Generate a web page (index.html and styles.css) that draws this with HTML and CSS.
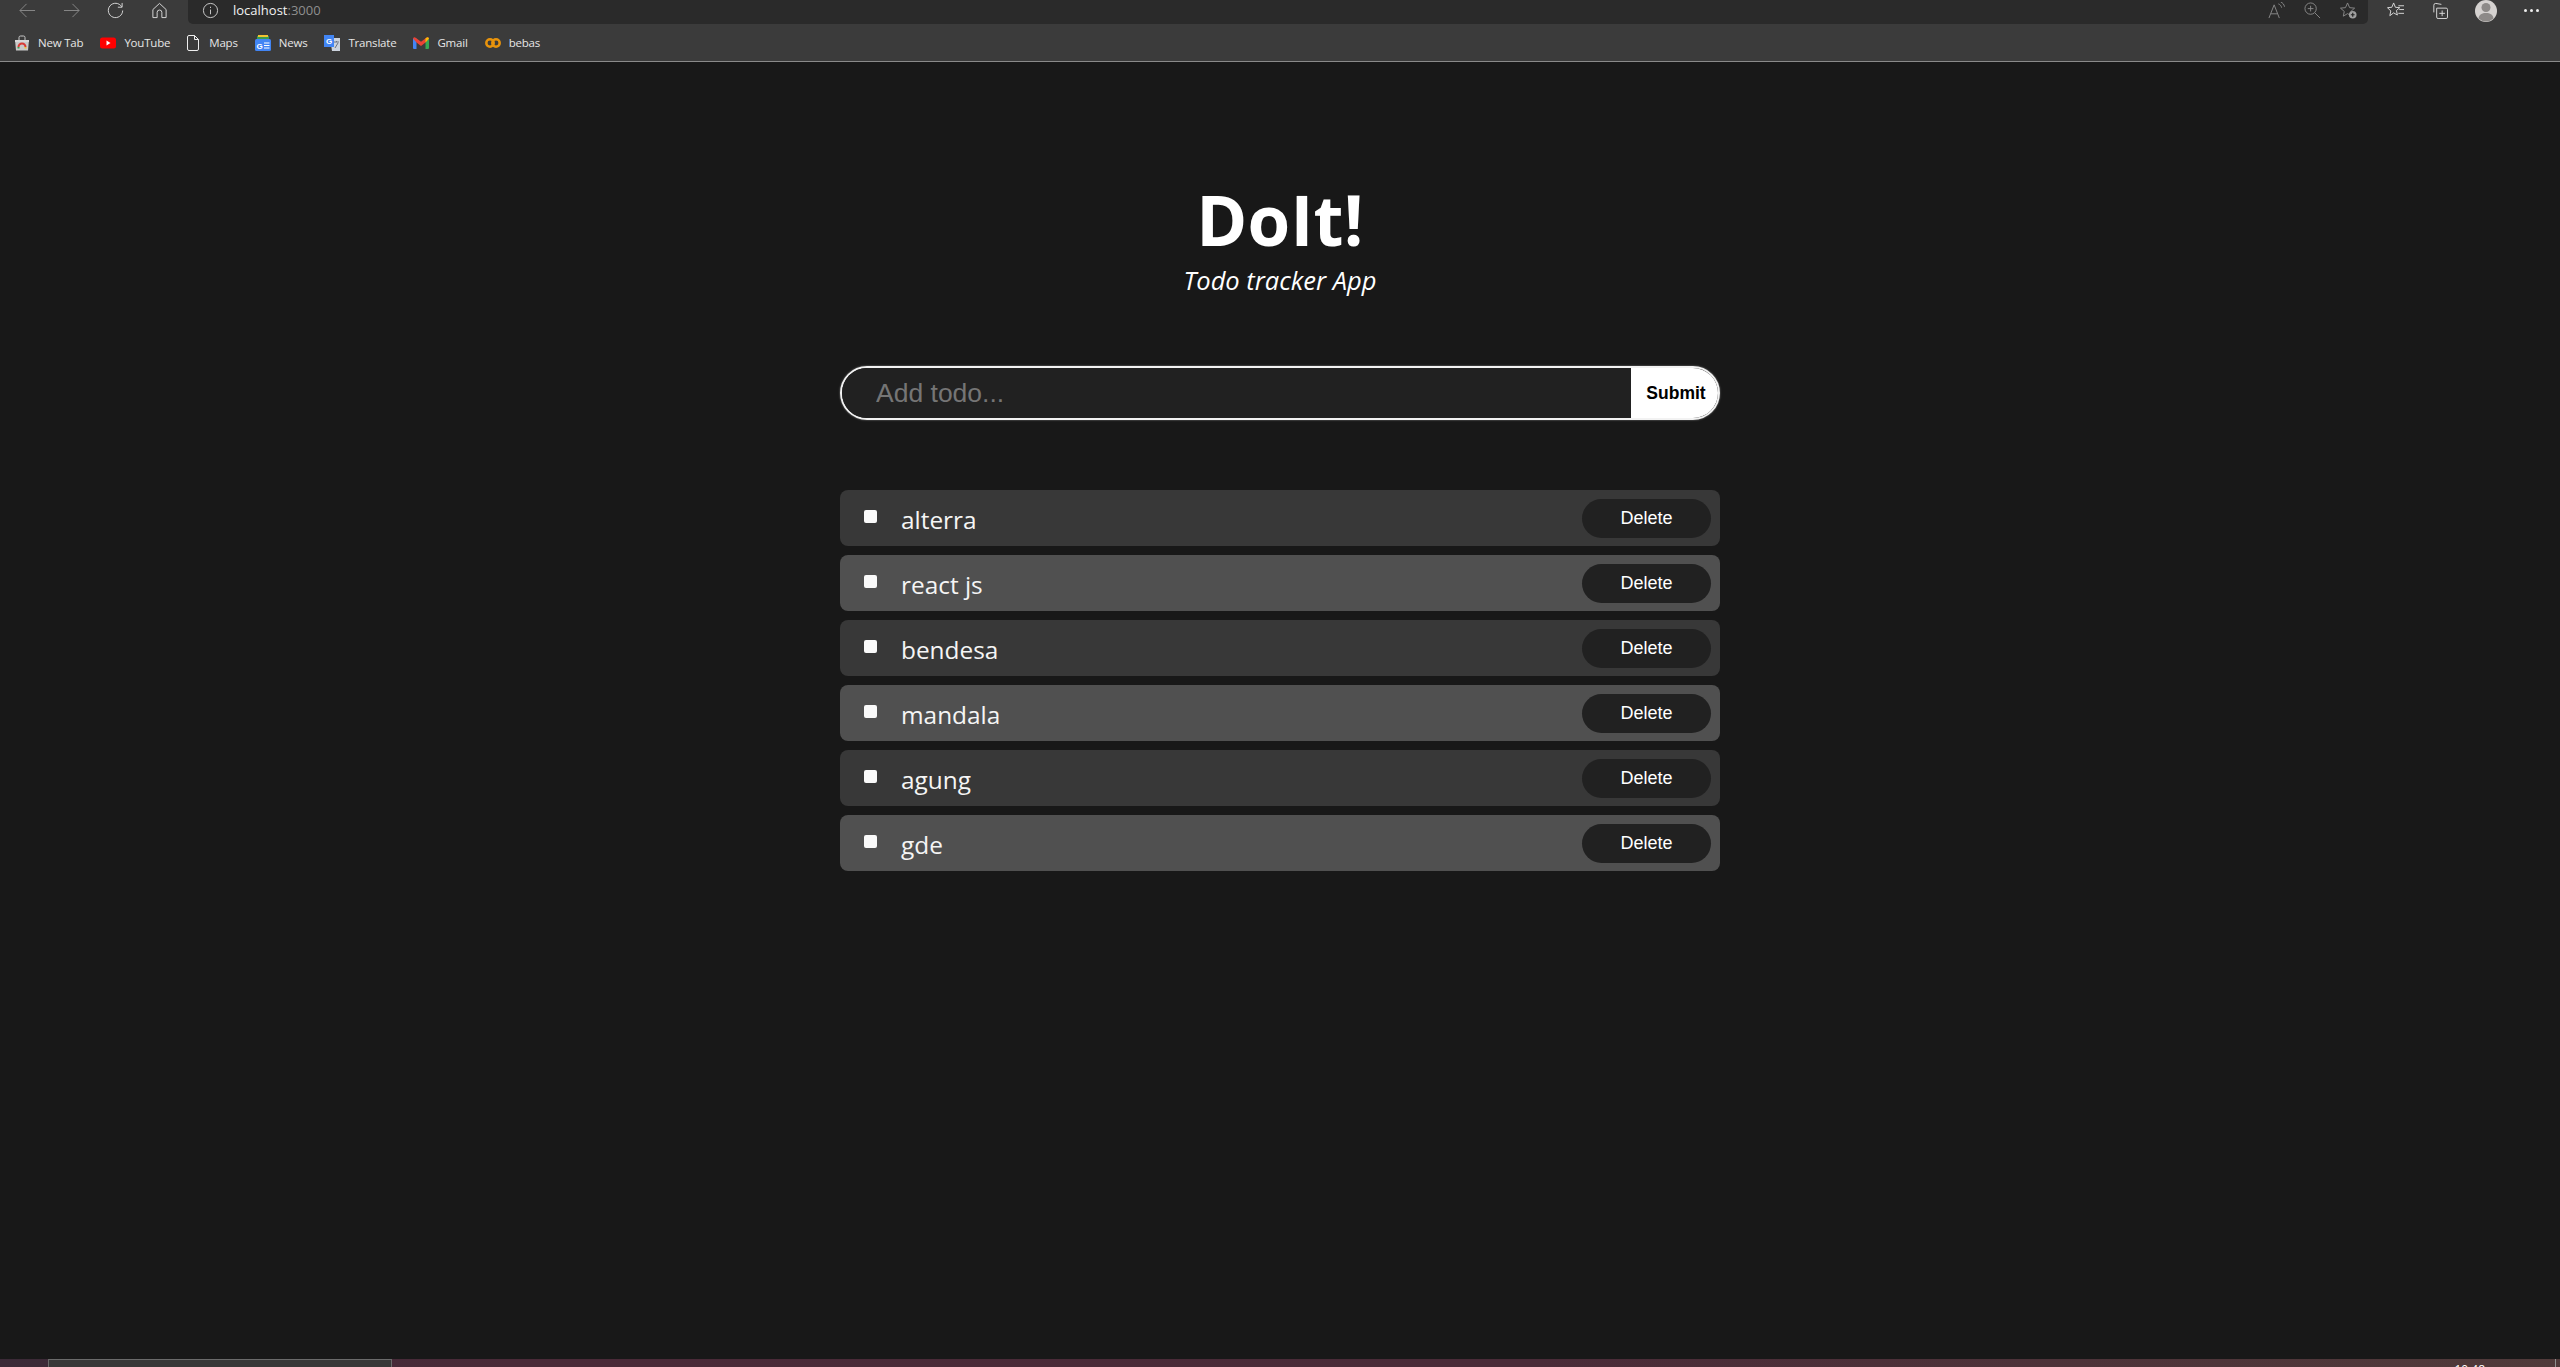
FILE: index.html
```html
<html>
    <head>
        <title>DoIt!</title>
        <link rel="stylesheet" href="styles.css">
    </head>
    <body>
        <div class="toolbar">
            <div class="nav-buttons">
                <svg class="icon dim" viewBox="0 0 18 18"><path d="M17 9H1M8 2L1 9l7 7"/></svg>
                <svg class="icon dim" viewBox="0 0 18 18"><path d="M1 9h16M10 2l7 7-7 7"/></svg>
                <svg class="icon" viewBox="0 0 18 18"><path d="M15.5 5A7.6 7.6 0 1 0 16.6 9M16 1v4.5h-4.5"/></svg>
                <svg class="icon" viewBox="0 0 18 18"><path d="M2 8l7-6.5L16 8v8.5h-4.5V11a2.5 2.5 0 0 0-5 0v5.5H2z"/></svg>
            </div>
            <div class="address-bar">
                <svg class="icon info" viewBox="0 0 18 18"><circle cx="9" cy="9" r="7.5"/><path d="M9 8v5M9 5v1.4"/></svg>
                <span class="host">localhost<span class="port">:3000</span></span>
                <div class="address-actions">
                    <svg class="icon dim" viewBox="0 0 18 18"><path d="M1 17L6.5 3 12 17M3 12.5h7M11 2c2 .8 3 2 3.400 4M13.500 0c2 .8 3.500 2.500 4 5"/></svg>
                    <svg class="icon dim" viewBox="0 0 18 18"><circle cx="7" cy="7" r="6"/><path d="M11.500 11.500L17 17M4 7h6M7 4v6"/></svg>
                    <svg class="icon dim" viewBox="0 0 18 18"><path d="M8 1l2.200 5 5.300.5-4 3.500 1 5-4.500-2.700L3.500 15l1-5-4-3.500L5.800 6z"/><circle class="fill-dim" cx="13.500" cy="13.500" r="4"/><path class="dark-stroke" d="M11.500 13.500h4M13.500 11.500v4"/></svg>
                </div>
            </div>
            <div class="browser-actions">
                <svg class="icon" viewBox="0 0 18 18"><path d="M7 1l1.900 4.600 4.600.4-3.500 3 1 4.800L7 11.500 3 14.500l1-5L.5 6l4.600-.4zM12 4h6M13 8h5M12 12h6"/></svg>
                <svg class="icon" viewBox="0 0 18 18"><path d="M3 11V3.500Q3 1.500 5 1.500l6 1M6 6.500h10q1.500 0 1.500 1.500v8q0 1.500-1.500 1.500H7.500Q6 17.500 6 16zM11.800 9v6M8.800 12h6"/></svg>
                <svg class="avatar" viewBox="0 0 22 22"><circle class="avatar-bg" cx="11" cy="11" r="11"/><circle class="avatar-fg" cx="11" cy="7.500" r="4.500"/><path class="avatar-fg" d="M3.500 18.500c.5-4 3.500-5.500 7.500-5.500s7 1.500 7.500 5.500A11 11 0 0 1 3.500 18.500z"/></svg>
                <div class="dots"><i></i><i></i><i></i></div>
            </div>
        </div>
        <div class="bookmarks">
            <a class="bookmark">
                <svg viewBox="0 0 16 16"><path fill="#c9c9c9" d="M1 5h14l-1 10.500H2z"/><path fill="none" stroke="#c9c9c9" d="M5 5V2.500Q5 1 6.500 1h3Q11 1 11 2.500V5"/><path fill="#d8d8d8" d="M1 5h14v2H1z"/><path fill="none" stroke="#d93a35" stroke-width="2" d="M4.500 12a3.500 3.500 0 0 1 7 0"/><path fill="none" stroke="#3a9a50" stroke-width="2" d="M4.500 12v1.500"/><path fill="none" stroke="#f2c230" stroke-width="2" d="M11.500 12v1.500"/></svg>
                New Tab
            </a>
            <a class="bookmark">
                <svg viewBox="0 0 16 16"><rect fill="#f00" y="2.500" width="16" height="11" rx="2.500"/><path fill="#fff" d="M6.500 5.500l4 2.500-4 2.500z"/></svg>
                YouTube
            </a>
            <a class="bookmark page-link">
                <svg viewBox="0 0 12 16"><path fill="none" stroke="#eee" d="M.5 2Q.5.500 2 .500h5.500L11.500 4.500V14Q11.500 15.500 10 15.500H2Q.5 15.500.5 14zM7.500.5v4h4"/></svg>
                Maps
            </a>
            <a class="bookmark">
                <svg viewBox="0 0 16 16"><path fill="#3a9a50" d="M2 1h12v4H2z"/><path fill="#f2c230" d="M3 0h10v2H3z"/><rect fill="#4285f4" y="4" width="16" height="12" rx="1.500"/><text class="icon-letter" x="1.500" y="13.500">G</text><path stroke="#fff" d="M9 8h5.500M9 10.500h5.500M9 13h5.500"/></svg>
                News
            </a>
            <a class="bookmark">
                <svg viewBox="0 0 16 16"><path fill="#ccd3dd" d="M6 3h10v13H8z"/><path fill="#4285f4" d="M0 0h10v12H0z"/><text class="icon-letter" x="2" y="9">G</text><path stroke="#6b7280" d="M10 7h5M12.500 6v1M11 13l3-5"/></svg>
                Translate
            </a>
            <a class="bookmark gmail-link">
                <svg viewBox="0 0 16 16"><path fill="#4285f4" d="M0 3.500h3.500V14H1q-1 0-1-1z"/><path fill="#34a853" d="M12.500 3.500H16V13q0 1-1 1h-2.500z"/><path fill="#ea4335" d="M0 3.500Q1 1.500 3 3l5 3.800L13 3q2-1.500 3 .5L12.500 7.500 8 11 3.500 7.500z"/><path fill="#fbbc04" d="M13 3q2-1.500 3 .5l-3.500 4V3.400z"/></svg>
                Gmail
            </a>
            <a class="bookmark">
                <svg viewBox="0 0 16 16"><circle fill="none" stroke="#e8930c" stroke-width="2.500" cx="5" cy="8" r="3.700"/><circle fill="none" stroke="#e8930c" stroke-width="2.500" cx="11" cy="8" r="3.700"/></svg>
                bebas
            </a>
        </div>
        <div class="app">
            <h1 class="app-title">DoIt!</h1>
            <p class="app-subtitle">Todo tracker App</p>
            <form class="todo-form">
                <input class="todo-input" type="text" placeholder="Add todo...">
                <button class="todo-submit" type="button">Submit</button>
            </form>
            <ul class="todo-list">
                <li class="todo-item">
                    <span class="todo-check"></span>
                    <span class="todo-name">alterra</span>
                    <button class="todo-delete" type="button">Delete</button>
                </li>
                <li class="todo-item">
                    <span class="todo-check"></span>
                    <span class="todo-name">react js</span>
                    <button class="todo-delete" type="button">Delete</button>
                </li>
                <li class="todo-item">
                    <span class="todo-check"></span>
                    <span class="todo-name">bendesa</span>
                    <button class="todo-delete" type="button">Delete</button>
                </li>
                <li class="todo-item">
                    <span class="todo-check"></span>
                    <span class="todo-name">mandala</span>
                    <button class="todo-delete" type="button">Delete</button>
                </li>
                <li class="todo-item">
                    <span class="todo-check"></span>
                    <span class="todo-name">agung</span>
                    <button class="todo-delete" type="button">Delete</button>
                </li>
                <li class="todo-item">
                    <span class="todo-check"></span>
                    <span class="todo-name">gde</span>
                    <button class="todo-delete" type="button">Delete</button>
                </li>
            </ul>
        </div>
        <div class="taskbar">
            <div class="task-window"></div>
            <span class="task-clock">10:48</span>
            <span class="task-divider"></span>
        </div>
    </body>
</html>
```

FILE: styles.css
```css
* {
    box-sizing: border-box;
}
body {
    margin: 0;
    height: 100vh;
    display: flex;
    flex-direction: column;
    overflow: hidden;
    background-color: #181818;
    font-family: "Open Sans", "Noto Sans", sans-serif;
    color: #fff;
}

/* browser bars */
.toolbar {
    height: 24px;
    display: flex;
    background-color: #3b3b3b;
    overflow: hidden;
}
.icon {
    width: 17px;
    height: 17px;
    flex: none;
    fill: none;
    stroke: #dcdcdc;
    stroke-width: 1;
}
.icon.dim {
    stroke: #8a8a8a;
}
.nav-buttons {
    width: 188px;
    padding: 2px 0 0 19px;
    display: flex;
    align-items: flex-start;
    gap: 27px;
}
.address-bar {
    width: 2180px;
    padding: 2px 0 0 14px;
    display: flex;
    align-items: flex-start;
    background-color: #2a2a2a;
    border-bottom-left-radius: 5px;
    border-bottom-right-radius: 5px;
}
.info {
    stroke: #cfcfcf;
}
.host {
    margin-left: 14px;
    font-size: 13px;
    line-height: 17px;
    color: #f2f2f2;
}
.port {
    color: #8f8f8f;
}
.address-actions {
    margin-left: auto;
    padding-right: 11px;
    display: flex;
    gap: 19px;
}
.fill-dim {
    fill: #a0a0a0;
    stroke: none;
}
.icon .dark-stroke {
    stroke: #222;
    stroke-width: 1.2;
}
.browser-actions {
    flex: 1;
    padding: 2px 0 0 19px;
    display: flex;
    align-items: flex-start;
    gap: 27px;
}
.avatar {
    width: 22px;
    height: 22px;
    margin-top: -2px;
}
.avatar-bg {
    fill: #d5d2d0;
}
.avatar-fg {
    fill: #8d8a88;
}
.dots {
    margin: 7px 0 0 0;
    display: flex;
    gap: 3px;
}
.dots i {
    width: 3px;
    height: 3px;
    background-color: #eee;
    border-radius: 50%;
}
.bookmarks {
    height: 38px;
    padding: 0 0 0 14px;
    display: flex;
    align-items: center;
    gap: 17px;
    background-color: #3b3b3b;
    border-bottom: 1px solid #8a8a8a;
}
.bookmark {
    display: flex;
    align-items: center;
    gap: 8px;
    font-size: 11.5px;
    letter-spacing: -0.2px;
    color: #e6e6e6;
}
.bookmark svg {
    width: 16px;
    height: 16px;
    flex: none;
}
.bookmark.page-link {
    gap: 10px;
}
.bookmark.page-link svg {
    width: 12px;
}
.icon-letter {
    font-family: "Liberation Sans", sans-serif;
    font-size: 8px;
    font-weight: bold;
    fill: #fff;
}

/* todo app */
.app {
    flex: 1;
    width: 880px;
    margin: 0 auto;
    text-align: center;
}
.app-title {
    margin: 115px 0 0;
    font-size: 69px;
    line-height: 84px;
    letter-spacing: 0.2px;
    font-weight: bold;
}
.app-subtitle {
    margin: 2px 0 0;
    font-size: 25.5px;
    line-height: 34px;
    font-style: italic;
}
.todo-form {
    height: 54px;
    margin-top: 69px;
    display: flex;
    border: 2px solid #f2f2f2;
    border-radius: 27px;
    overflow: hidden;
    box-shadow: 0 0 2px #888;
}
.todo-input {
    flex: 1;
    min-width: 0;
    padding: 0 0 0 34px;
    border: none;
    outline: none;
    background-color: #212121;
    font-family: "Liberation Sans", sans-serif;
    font-size: 26.5px;
    color: #fff;
}
.todo-input::placeholder {
    color: #757575;
}
.todo-submit {
    width: 87px;
    padding: 0 0 0 3px;
    border: none;
    background-color: #fff;
    font-family: "Liberation Sans", sans-serif;
    font-size: 17.5px;
    font-weight: bold;
    color: #000;
}
.todo-list {
    margin: 70px 0 0;
    padding: 0;
    list-style: none;
    display: flex;
    flex-direction: column;
    gap: 9px;
}
.todo-item {
    height: 56px;
    padding: 0 9px 0 24px;
    display: flex;
    align-items: center;
    background-color: #383838;
    border-radius: 8px;
}
.todo-item:nth-child(even) {
    background-color: #505050;
}
.todo-check {
    width: 13px;
    height: 13px;
    margin-top: -3px;
    flex: none;
    background-color: #fafafa;
    border-radius: 2px;
}
.todo-name {
    margin: 2px 0 0 24px;
    font-size: 24.4px;
    color: #f5f5f5;
}
.todo-delete {
    width: 129px;
    height: 39px;
    margin-left: auto;
    border: none;
    border-radius: 20px;
    background-color: #212121;
    font-family: "Liberation Sans", sans-serif;
    font-size: 18px;
    color: #fff;
}

/* bit of the taskbar at the bottom edge */
.taskbar {
    height: 8px;
    padding-left: 48px;
    display: flex;
    overflow: hidden;
    background: linear-gradient(90deg, #3b2a37 0%, #4a2a38 20%, #4a2b38 60%, #503a3a 100%);
}
.task-window {
    width: 344px;
    height: 8px;
    background-color: #383838;
    border: 1px solid #6a6a6a;
    border-bottom: none;
}
.task-clock {
    margin: 3px 70px 0 auto;
    font-size: 12px;
    line-height: 16px;
}
.task-divider {
    width: 1px;
    margin-right: 4px;
    background-color: #8f8f8f;
}
```
